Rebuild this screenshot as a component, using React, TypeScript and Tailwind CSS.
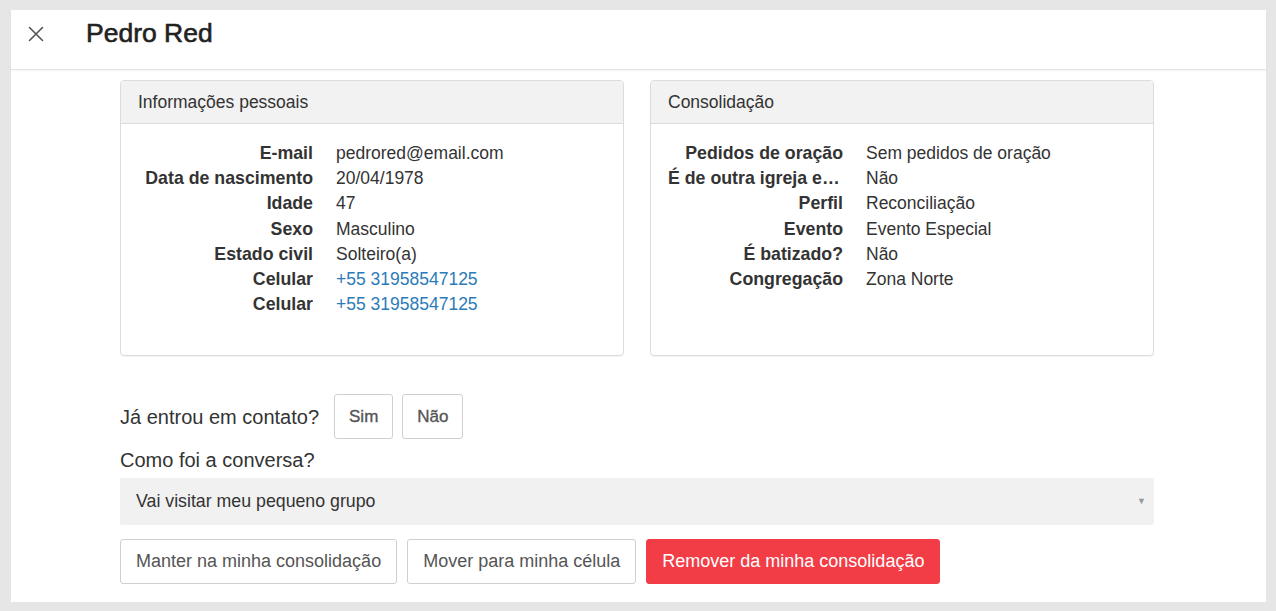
import React from "react";

type Row = { label: string; value: string; link?: boolean };

const personal: Row[] = [
  { label: "E-mail", value: "pedrored@email.com" },
  { label: "Data de nascimento", value: "20/04/1978" },
  { label: "Idade", value: "47" },
  { label: "Sexo", value: "Masculino" },
  { label: "Estado civil", value: "Solteiro(a)" },
  { label: "Celular", value: "+55 31958547125", link: true },
  { label: "Celular", value: "+55 31958547125", link: true },
];

const consolidation: Row[] = [
  { label: "Pedidos de oração", value: "Sem pedidos de oração" },
  { label: "É de outra igreja evangélica?", value: "Não" },
  { label: "Perfil", value: "Reconciliação" },
  { label: "Evento", value: "Evento Especial" },
  { label: "É batizado?", value: "Não" },
  { label: "Congregação", value: "Zona Norte" },
];

function InfoPanel({ title, rows }: { title: string; rows: Row[] }) {
  return (
    <section className="h-[276px] w-[504px] overflow-hidden rounded-[4px] border border-[#dcdcdc] shadow-[0_1px_1px_rgba(0,0,0,0.05)]">
      <div className="flex h-[43px] items-center border-b border-[#dcdcdc] bg-[#f2f2f2] px-[17px] text-[17.5px] text-[#333]">
        {title}
      </div>
      <dl className="grid grid-cols-[175px_1fr] gap-x-[23px] pl-[17px] pt-[17px] leading-[25.2px]">
        {rows.map((r, i) => (
          <React.Fragment key={i}>
            <dt className="truncate text-right text-[17.75px] font-bold text-[#333]">{r.label}</dt>
            <dd className={"text-[17.5px] " + (r.link ? "text-[#2b7bb9]" : "text-[#333]")}>{r.value}</dd>
          </React.Fragment>
        ))}
      </dl>
    </section>
  );
}

export default function App() {
  return (
    <div
      className="h-[611px] w-full bg-[#e6e6e6] pb-[9px] pl-[11px] pr-[10px] pt-[10px]"
      style={{ fontFamily: '"Helvetica Neue", "Liberation Sans", Arial, sans-serif' }}
    >
      <div className="flex h-full flex-col bg-white">
        <header className="flex h-[60px] shrink-0 items-center border-b border-[#e2e2e2] pb-[12px] shadow-[0_1px_2px_rgba(0,0,0,0.04)]">
          <button className="ml-[17px] mt-[1px] flex h-[16px] w-[16px] items-center justify-center" aria-label="Fechar">
            <svg width="16" height="16" viewBox="0 0 16 16" fill="none" stroke="#555" strokeWidth="1.6" strokeLinecap="round">
              <path d="M1.5 1.5 L14.5 14.5 M14.5 1.5 L1.5 14.5" />
            </svg>
          </button>
          <h1 className="ml-[42px] text-[26.5px] font-normal text-[#222] [-webkit-text-stroke:0.6px_#222]">
            Pedro Red
          </h1>
        </header>

        <main className="ml-[109px] w-[1034px] pt-[10px]">
          <div className="flex gap-[26px]">
            <InfoPanel title="Informações pessoais" rows={personal} />
            <InfoPanel title="Consolidação" rows={consolidation} />
          </div>

          <div className="mt-[38px] flex items-center">
            <span className="mr-[15px] text-[20px] text-[#333]">Já entrou em contato?</span>
            <button className="h-[45px] rounded-[3px] border border-[#cfcfcf] px-[14px] text-[17px] text-[#555] [-webkit-text-stroke:0.35px_#555]">
              Sim
            </button>
            <button className="ml-[9px] h-[45px] rounded-[3px] border border-[#cfcfcf] px-[14px] text-[17px] text-[#555] [-webkit-text-stroke:0.35px_#555]">
              Não
            </button>
          </div>

          <p className="mt-[8px] text-[20px] leading-[27px] text-[#333]">Como foi a conversa?</p>

          <div className="mt-[4px] flex h-[47px] items-center justify-between rounded-[2px] bg-[#f1f1f1] pl-[16px] pr-[8px]">
            <span className="text-[17.75px] text-[#333]">Vai visitar meu pequeno grupo</span>
            <span className="text-[9px] text-[#999]">▼</span>
          </div>

          <div className="mt-[14px] flex gap-[10px]">
            <button className="h-[45px] rounded-[3px] border border-[#cfcfcf] px-[15px] text-[18px] text-[#555]">
              Manter na minha consolidação
            </button>
            <button className="h-[45px] rounded-[3px] border border-[#cfcfcf] px-[15px] text-[18px] text-[#555]">
              Mover para minha célula
            </button>
            <button className="h-[45px] rounded-[3px] border border-[#f23d47] bg-[#f23d47] px-[15px] text-[18px] text-white">
              Remover da minha consolidação
            </button>
          </div>
        </main>
      </div>
    </div>
  );
}
